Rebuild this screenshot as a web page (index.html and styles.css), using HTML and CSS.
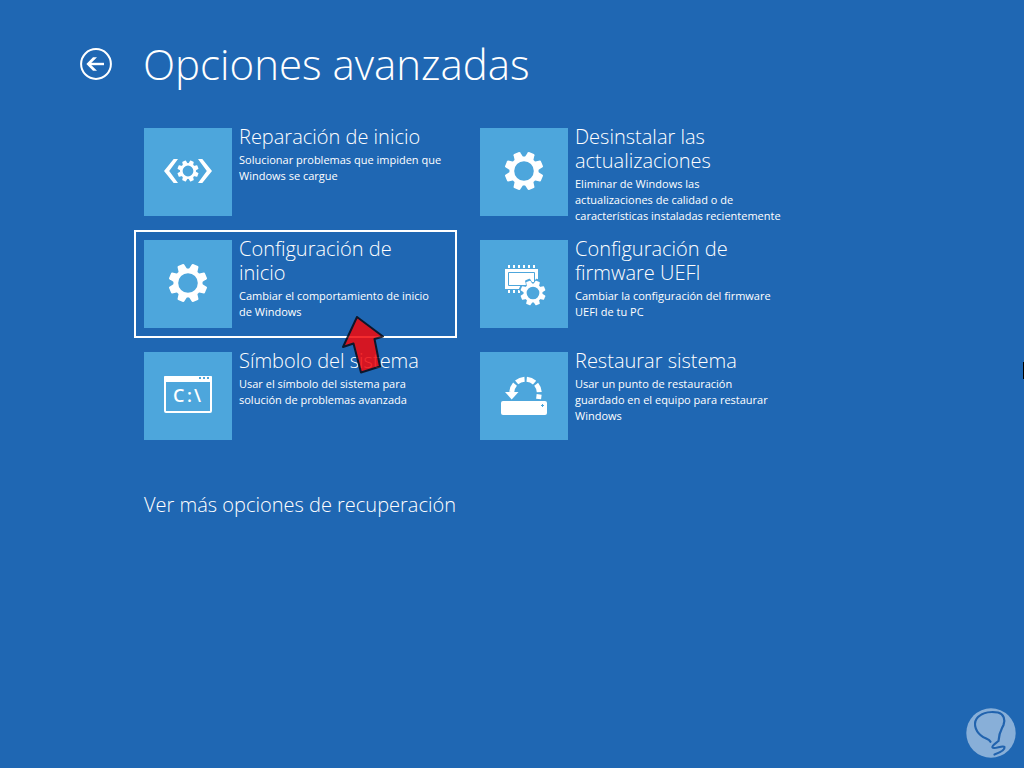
FILE: index.html
```html
<!DOCTYPE html>
<html lang="es">
<head>
    <meta charset="UTF-8">
    <meta name="viewport" content="width=device-width, initial-scale=1.0">
    <title>Opciones avanzadas</title>
    <link rel="stylesheet" href="styles.css">
</head>
<body>
    <svg class="defs" aria-hidden="true">
        <symbol id="gear" viewBox="-20 -20 40 40">
            <circle r="12.2" fill="none" stroke="currentColor" stroke-width="4.8"/>
            <g id="teeth" fill="currentColor">
                <path id="tooth" d="M-4.6 -13L-3.6 -18.6Q-3.4 -19.4 -2.6 -19.4L2.6 -19.4Q3.4 -19.4 3.6 -18.6L4.6 -13Z" transform="rotate(22.5)"/>
                <use href="#tooth" transform="rotate(45)"/>
                <use href="#tooth" transform="rotate(90)"/>
                <use href="#tooth" transform="rotate(135)"/>
                <use href="#tooth" transform="rotate(180)"/>
                <use href="#tooth" transform="rotate(225)"/>
                <use href="#tooth" transform="rotate(270)"/>
                <use href="#tooth" transform="rotate(315)"/>
            </g>
        </symbol>
    </svg>
    <header class="header">
        <button class="back" type="button" aria-label="Atrás">
            <svg viewBox="0 0 32 32" width="32" height="32">
                <circle cx="16" cy="16" r="14.9" fill="none" stroke="currentColor" stroke-width="2"/>
                <path d="M8.5 16H24" fill="none" stroke="currentColor" stroke-width="2.4"/>
                <path d="M13 9.2H17L10.2 16L17 22.8H13L6.400 16Z" fill="currentColor"/>
            </svg>
        </button>
        <h1>Opciones avanzadas</h1>
    </header>
    <main>
        <div class="options">
            <button class="option" type="button">
                <svg class="tile" viewBox="0 0 88 88">
                    <path d="M29.7 31H34L25.2 43L34 55H29.7L20 43Z" fill="currentColor"/>
                    <path d="M58.3 31H54L62.8 43L54 55H58.3L68 43Z" fill="currentColor"/>
                    <use href="#gear" x="33" y="32" width="22" height="22"/>
                </svg>
                <span class="text">
                    <span class="name">Reparación de inicio</span>
                    <span class="info">Solucionar problemas que impiden que<br>Windows se cargue</span>
                </span>
            </button>
            <button class="option" type="button">
                <svg class="tile" viewBox="0 0 88 88">
                    <use href="#gear" x="24" y="23" width="40" height="40"/>
                </svg>
                <span class="text">
                    <span class="name">Desinstalar las<br>actualizaciones</span>
                    <span class="info">Eliminar de Windows las<br>actualizaciones de calidad o de<br>características instaladas recientemente</span>
                </span>
            </button>
            <button class="option selected" type="button">
                <svg class="tile" viewBox="0 0 88 88">
                    <use href="#gear" x="24" y="23" width="40" height="40"/>
                </svg>
                <span class="text">
                    <span class="name">Configuración de<br>inicio</span>
                    <span class="info">Cambiar el comportamiento de inicio<br>de Windows</span>
                </span>
                <svg class="pointer" viewBox="0 0 46 60" aria-hidden="true">
                    <path d="M17 3L43 22.5L34.5 25L40 52.500L21 58.500L13.5 29.5L3 33Z" fill="#f4080b" stroke="#0a0a14" stroke-width="2" stroke-linejoin="round"/>
                </svg>
            </button>
            <button class="option" type="button">
                <svg class="tile" viewBox="0 0 88 88">
                    <path d="M25 29H58V49H25Z" fill="currentColor"/>
                    <path d="M28.5 32.5H54.5V45.5H28.5Z" fill="none" stroke="#4da6dc"/>
                    <path d="M28 26.5H56" stroke="currentColor" stroke-width="3" stroke-dasharray="2 3"/>
                    <path d="M28 51.5H41" stroke="currentColor" stroke-width="3" stroke-dasharray="2 3"/>
                    <g class="cutout"><use href="#gear" x="38" y="38" width="30" height="30"/></g>
                    <circle cx="53" cy="53" r="8" fill="#4da6dc"/>
                    <use href="#gear" x="40" y="40" width="26" height="26"/>
                </svg>
                <span class="text">
                    <span class="name">Configuración de<br>firmware UEFI</span>
                    <span class="info">Cambiar la configuración del firmware<br>UEFI de tu PC</span>
                </span>
            </button>
            <button class="option" type="button">
                <svg class="tile" viewBox="0 0 88 88">
                    <rect x="21" y="25" width="46" height="35" rx="1" fill="none" stroke="currentColor" stroke-width="2"/>
                    <path d="M20 25Q20 24 21 24H67Q68 24 68 25V30H20Z" fill="currentColor"/>
                    <path d="M55 26H65" stroke="#4da6dc" stroke-width="2" stroke-dasharray="2 2"/>
                    <text class="prompt" x="29 43 50" y="50">C:\</text>
                </svg>
                <span class="text">
                    <span class="name">Símbolo del sistema</span>
                    <span class="info">Usar el símbolo del sistema para<br>solución de problemas avanzada</span>
                </span>
            </button>
            <button class="option" type="button">
                <svg class="tile" viewBox="0 0 88 88">
                    <rect x="21" y="49" width="46" height="14" rx="2" fill="currentColor"/>
                    <path d="M62.5 52V55M61 53.5H64" stroke="#4da6dc" stroke-width="1"/>
                    <path d="M31.7 41A13.8 13.8 0 0 1 59.3 41L58.6 47" fill="none" stroke="currentColor" stroke-width="5" stroke-dasharray="8.6 2.24" stroke-dashoffset="-1.1"/>
                    <path d="M25 40H38.500L31.7 47.5Z" fill="currentColor"/>
                </svg>
                <span class="text">
                    <span class="name">Restaurar sistema</span>
                    <span class="info">Usar un punto de restauración<br>guardado en el equipo para restaurar<br>Windows</span>
                </span>
            </button>
        </div>
        <a class="more" href="#">Ver más opciones de recuperación</a>
    </main>
    <div class="edge-mark"></div>
    <svg class="watermark" viewBox="0 0 50 50" aria-hidden="true">
        <circle cx="25" cy="25" r="24.7" fill="#88afd8"/>
        <path d="M24.5 33.8C23 30.5 19 31 15 27.5C8.5 22 7 14 12 9C17 4 26 3.5 32 4.5C38 6 39.5 12 37.5 17C35.5 21.5 33 24 32.5 33C30 35 25.500 37.5 26.5 39.5C28 42 37 36.5 38.5 39C39 41.5 34 44.5 28.5 46.5" fill="none" stroke="#2163ae" stroke-width="2.2" stroke-linecap="round"/>
    </svg>
</body>
</html>
```
FILE: styles.css
```css
* {
    box-sizing: border-box;
}
body {
    margin: 0;
    min-height: 100vh;
    background-color: #1f67b3;
    color: #fff;
    font-family: "Open Sans", "Noto Sans", sans-serif;
    overflow-x: hidden;
}
.defs {
    position: absolute;
    width: 0;
    height: 0;
}
button {
    background: none;
    border: none;
    padding: 0;
    color: inherit;
    font: inherit;
    text-align: left;
    cursor: pointer;
}
.header {
    display: flex;
    align-items: center;
    gap: 31px;
    padding: 32px 80px 0;
}
.back {
    width: 32px;
    height: 32px;
}
.back svg {
    display: block;
}
h1 {
    margin: 0;
    font-size: 42px;
    font-weight: 300;
    line-height: 64px;
}
main {
    padding: 22px 134px 0;
}
.options {
    display: grid;
    grid-template-columns: repeat(2, minmax(0, 323px));
    gap: 4px 13px;
}
.option {
    display: flex;
    align-items: flex-start;
    gap: 7px;
    min-height: 108px;
    padding: 8px 0 0 8px;
    border: 2px solid transparent;
    position: relative;
}
.selected {
    border-color: #fff;
}
.tile {
    flex: none;
    width: 88px;
    height: 88px;
    background-color: #4da6dc;
}
.text {
    margin-top: -3px;
}
.name, .info {
    display: block;
}
.name {
    font-size: 20px;
    font-weight: 300;
    line-height: 24px;
}
.info {
    margin-top: 3px;
    font-size: 11px;
    line-height: 16px;
}
.cutout {
    color: #4da6dc;
}
.prompt {
    fill: #fff;
    font-size: 18px;
    font-weight: 600;
}
.pointer {
    position: absolute;
    left: 204px;
    top: 82px;
    width: 46px;
    height: 60px;
    opacity: 0.85;
    z-index: 1;
}
.more {
    display: inline-block;
    margin: 43px 10px 0;
    color: #fff;
    font-size: 20px;
    font-weight: 300;
    line-height: 24px;
    text-decoration: none;
}
.edge-mark {
    position: absolute;
    right: 0;
    top: 362px;
    width: 1px;
    height: 17px;
    background-color: #000;
}
.watermark {
    position: fixed;
    right: 8px;
    bottom: 10px;
    width: 50px;
    height: 50px;
}
```
